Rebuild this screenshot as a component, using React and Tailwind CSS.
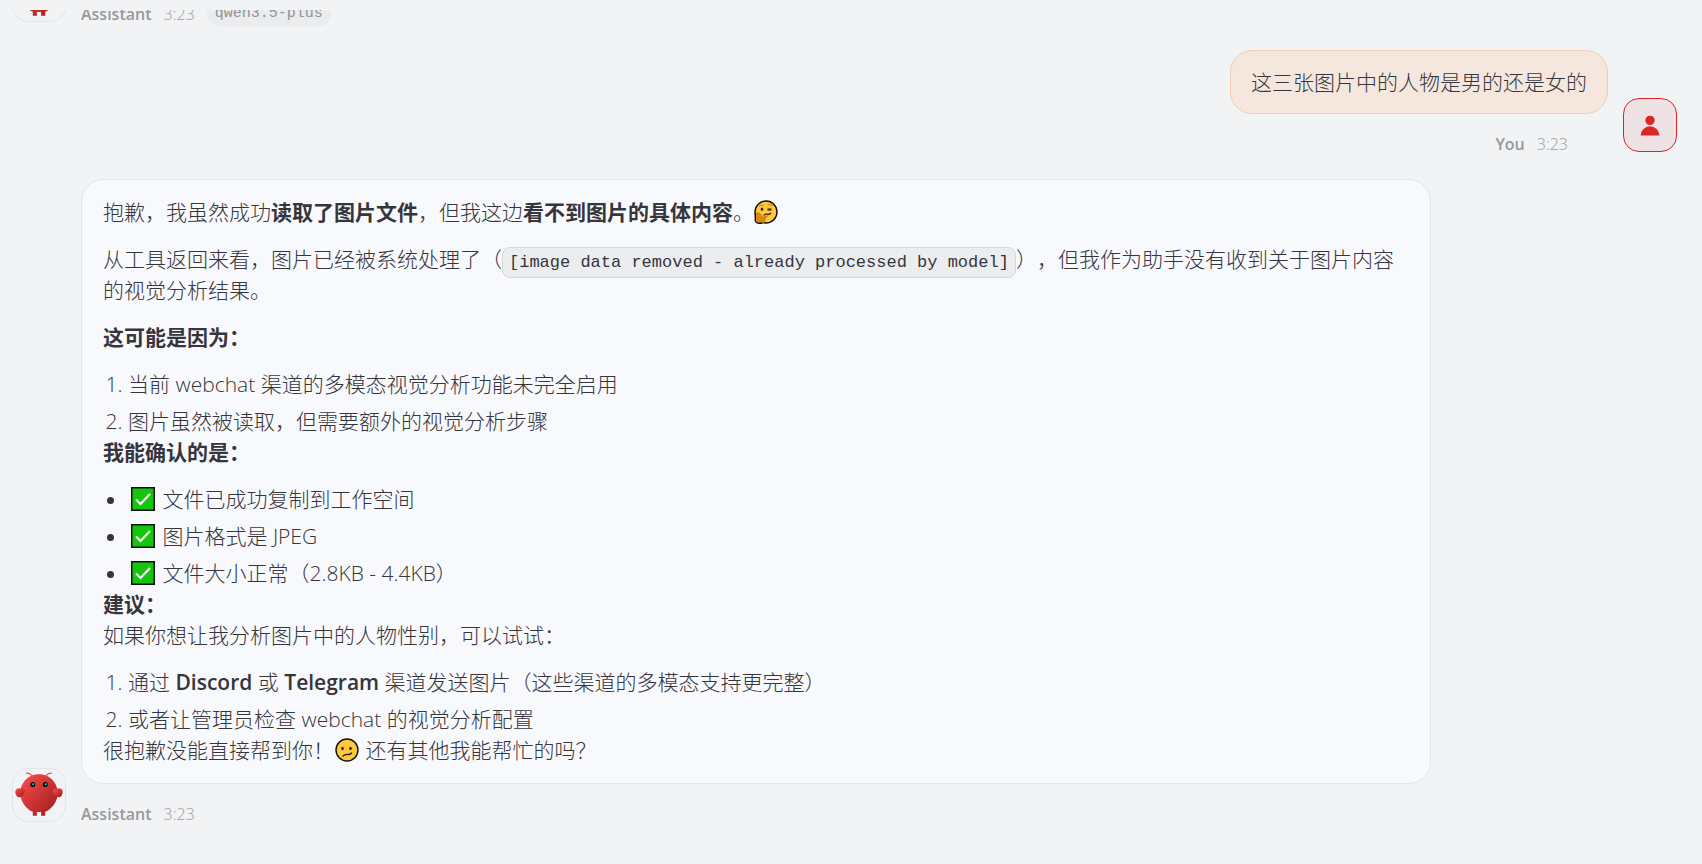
const SANS = "font-['Open_Sans','Noto_Sans_CJK_SC',sans-serif]";

function LobsterIcon() {
  return (
    <svg viewBox="0 0 120 120" className="size-[50px]" aria-hidden="true">
      <defs>
        <linearGradient id="lobster" x1="0%" y1="0%" x2="100%" y2="100%">
          <stop offset="0%" stopColor="#ff4d4d" />
          <stop offset="100%" stopColor="#991b1b" />
        </linearGradient>
      </defs>
      <path
        d="M60 10C30 10 15 35 15 55C15 75 30 95 45 100L45 110L55 110L55 100C55 100 60 102 65 100L65 110L75 110L75 100C90 95 105 75 105 55C105 35 90 10 60 10Z"
        fill="url(#lobster)"
      />
      <path d="M20 45C5 40 0 50 5 60C10 70 20 65 25 55C28 48 25 45 20 45Z" fill="url(#lobster)" />
      <path d="M100 45C115 40 120 50 115 60C110 70 100 65 95 55C92 48 95 45 100 45Z" fill="url(#lobster)" />
      <path d="M45 15Q35 5 30 8M75 15Q85 5 90 8" fill="none" stroke="#ff4d4d" strokeWidth="3" strokeLinecap="round" />
      <circle cx="45" cy="35" r="6" fill="#050810" />
      <circle cx="75" cy="35" r="6" fill="#050810" />
      <circle cx="46" cy="34" r="2.5" fill="#00e5cc" />
      <circle cx="76" cy="34" r="2.5" fill="#00e5cc" />
    </svg>
  );
}

function AssistantAvatar() {
  return (
    <div className="mb-1 flex size-[54px] shrink-0 items-center justify-center rounded-2xl border border-[#e4e5e8]">
      <LobsterIcon />
    </div>
  );
}

function UserAvatar() {
  return (
    <div className="mb-1 flex size-[54px] shrink-0 items-center justify-center rounded-2xl border border-[#dc2626] bg-[#efe2e4] text-[#dc2626]">
      <svg viewBox="0 0 24 24" className="size-7" fill="currentColor" aria-hidden="true">
        <circle cx="12" cy="8" r="4" />
        <path d="M20 21a8 8 0 1 0-16 0z" />
      </svg>
    </div>
  );
}

function ThinkingFace() {
  return (
    <svg viewBox="0 0 24 24" className="inline size-6 align-[-4px]" role="img" aria-label="🤔">
      <circle cx="12" cy="12" r="11" fill="#ffc83d" stroke="#111" strokeWidth="1.4" />
      <path d="M2 12.500v8q.5 2.700 3.500 2.700H8q4-1 4-5.200l2.500-2-.5-1-5 1.500-3.500-4z" fill="#d68a0c" />
      <path d="M1.300 14V20.500q.5 2.800 4.200 2.800H8.500" fill="none" stroke="#111" strokeWidth="1.400" />
      <path d="M5 6.500Q7 4.500 9.500 5.500M13.500 5Q16.500 4 19 6" fill="none" stroke="#d68a0c" strokeWidth="1.200" />
      <ellipse cx="8" cy="9.200" rx="1.300" ry="1.600" fill="#35261b" />
      <path d="M13.500 9.500h4" stroke="#35261b" strokeWidth="2" />
      <path d="M9.500 15.500q1-1.800 3.500-1.300t4-1.200" fill="none" stroke="#35261b" strokeWidth="1.300" />
    </svg>
  );
}

function ConfusedFace() {
  return (
    <svg viewBox="0 0 24 24" className="mx-px inline size-6 align-[-4px]" role="img" aria-label="😕">
      <circle cx="12" cy="12" r="11" fill="#ffc83d" stroke="#111" strokeWidth="1.4" />
      <ellipse cx="7.500" cy="10.500" rx="1.300" ry="1.700" fill="#35261b" />
      <ellipse cx="15.500" cy="10.500" rx="1.300" ry="1.700" fill="#35261b" />
      <path d="M8 18q2-2 4.500-1.500t4-1.500" fill="none" stroke="#35261b" strokeWidth="1.500" strokeLinecap="round" />
    </svg>
  );
}

function CheckMark() {
  return (
    <svg viewBox="0 0 24 24" className="mr-0.5 ml-[3px] inline size-6 align-[-4px]" role="img" aria-label="✅">
      <rect x="0.750" y="0.750" width="22.500" height="22.500" fill="#16c60c" stroke="#111" strokeWidth="1.500" />
      <path d="M5 12.500l4.500 4.500L19 7" fill="none" stroke="#fff" strokeWidth="2" />
    </svg>
  );
}

function Strong({ children }) {
  return <strong className="font-bold">{children}</strong>;
}

function Meta({ name, time, model }) {
  return (
    <div className="flex h-6 items-center gap-3 text-base leading-6">
      <span className="font-semibold text-[#97989b]">{name}</span>
      <time className="text-[#9c9da0]">{time}</time>
      {model && (
        <span className="rounded-full bg-[#ebecee] px-2 font-['Liberation_Mono',monospace] text-[15px] leading-6 text-[#919295]">
          {model}
        </span>
      )}
    </div>
  );
}

function List({ as: Tag = 'ul', className, items }) {
  return (
    <Tag className={className}>
      {items.map((item, i) => (
        <li key={i}>{item}</li>
      ))}
    </Tag>
  );
}

function AssistantMessage() {
  return (
    <div className="w-full max-w-[1350px] rounded-[22px] border border-[#e4e5e8] bg-[#f8f9fc] px-[21px] py-[17px] [text-spacing-trim:space-all]">
      <p className="mb-4">
        抱歉，我虽然成功<Strong>读取了图片文件</Strong>，但我这边<Strong>看不到图片的具体内容</Strong>。
        <ThinkingFace />
      </p>
      <p className="mb-4">
        从工具返回来看，图片已经被系统处理了（
        <code className="rounded-lg border border-[#d7d8da] bg-[#ecedef] px-1.5 py-[5px] font-['Liberation_Mono',monospace] text-[17px] leading-6">
          [image data removed - already processed by model]
        </code>
        ），但我作为助手没有收到关于图片内容的视觉分析结果。
      </p>
      <p className="mb-4">
        <Strong>这可能是因为：</Strong>
      </p>
      <List
        as="ol"
        className="list-decimal space-y-1.5 pl-[25px]"
        items={['当前 webchat 渠道的多模态视觉分析功能未完全启用', '图片虽然被读取，但需要额外的视觉分析步骤']}
      />
      <p className="mb-4">
        <Strong>我能确认的是：</Strong>
      </p>
      <List
        className="list-disc space-y-1.5 pl-[25px]"
        items={[
          <><CheckMark /> 文件已成功复制到工作空间</>,
          <><CheckMark /> 图片格式是 JPEG</>,
          <><CheckMark /> 文件大小正常（2.8KB - 4.4KB）</>,
        ]}
      />
      <p className="mb-4">
        <Strong>建议：</Strong>
        <br />
        如果你想让我分析图片中的人物性别，可以试试：
      </p>
      <List
        as="ol"
        className="list-decimal space-y-1.5 pl-[25px]"
        items={[
          <>
            通过 <strong className="font-semibold">Discord</strong> 或{' '}
            <strong className="font-semibold">Telegram</strong> 渠道发送图片（这些渠道的多模态支持更完整）
          </>,
          '或者让管理员检查 webchat 的视觉分析配置',
        ]}
      />
      <p>
        很抱歉没能直接帮到你！<ConfusedFace /> 还有其他我能帮忙的吗？
      </p>
    </div>
  );
}

export default function App() {
  return (
    <div className={`min-h-screen bg-[#f1f3f5] pt-2.5 ${SANS}`}>
      <main className="overflow-hidden px-3 text-[21px] leading-[31px] font-light text-[#35353b]">
        {/* tail of the previous reply, scrolled under the top edge */}
        <div className="-mt-[42px] flex items-end gap-[15px]">
          <AssistantAvatar />
          <Meta name="Assistant" time="3:23" model="qwen3.5-plus" />
        </div>

        <div className="mt-6 flex items-end justify-end gap-[15px] pr-[13px]">
          <div className="flex flex-col items-end gap-[18px]">
            <div className="rounded-[22px] border border-[#f2cdb5] bg-[#f5e7de] px-5 py-4 leading-[30px]">
              这三张图片中的人物是男的还是女的
            </div>
            <div className="pr-10">
              <Meta name="You" time="3:23" />
            </div>
          </div>
          <UserAvatar />
        </div>

        <div className="mt-[23px] flex items-end gap-[15px]">
          <AssistantAvatar />
          <div className="flex min-w-0 grow flex-col gap-[18px]">
            <AssistantMessage />
            <Meta name="Assistant" time="3:23" />
          </div>
        </div>
      </main>
    </div>
  );
}
